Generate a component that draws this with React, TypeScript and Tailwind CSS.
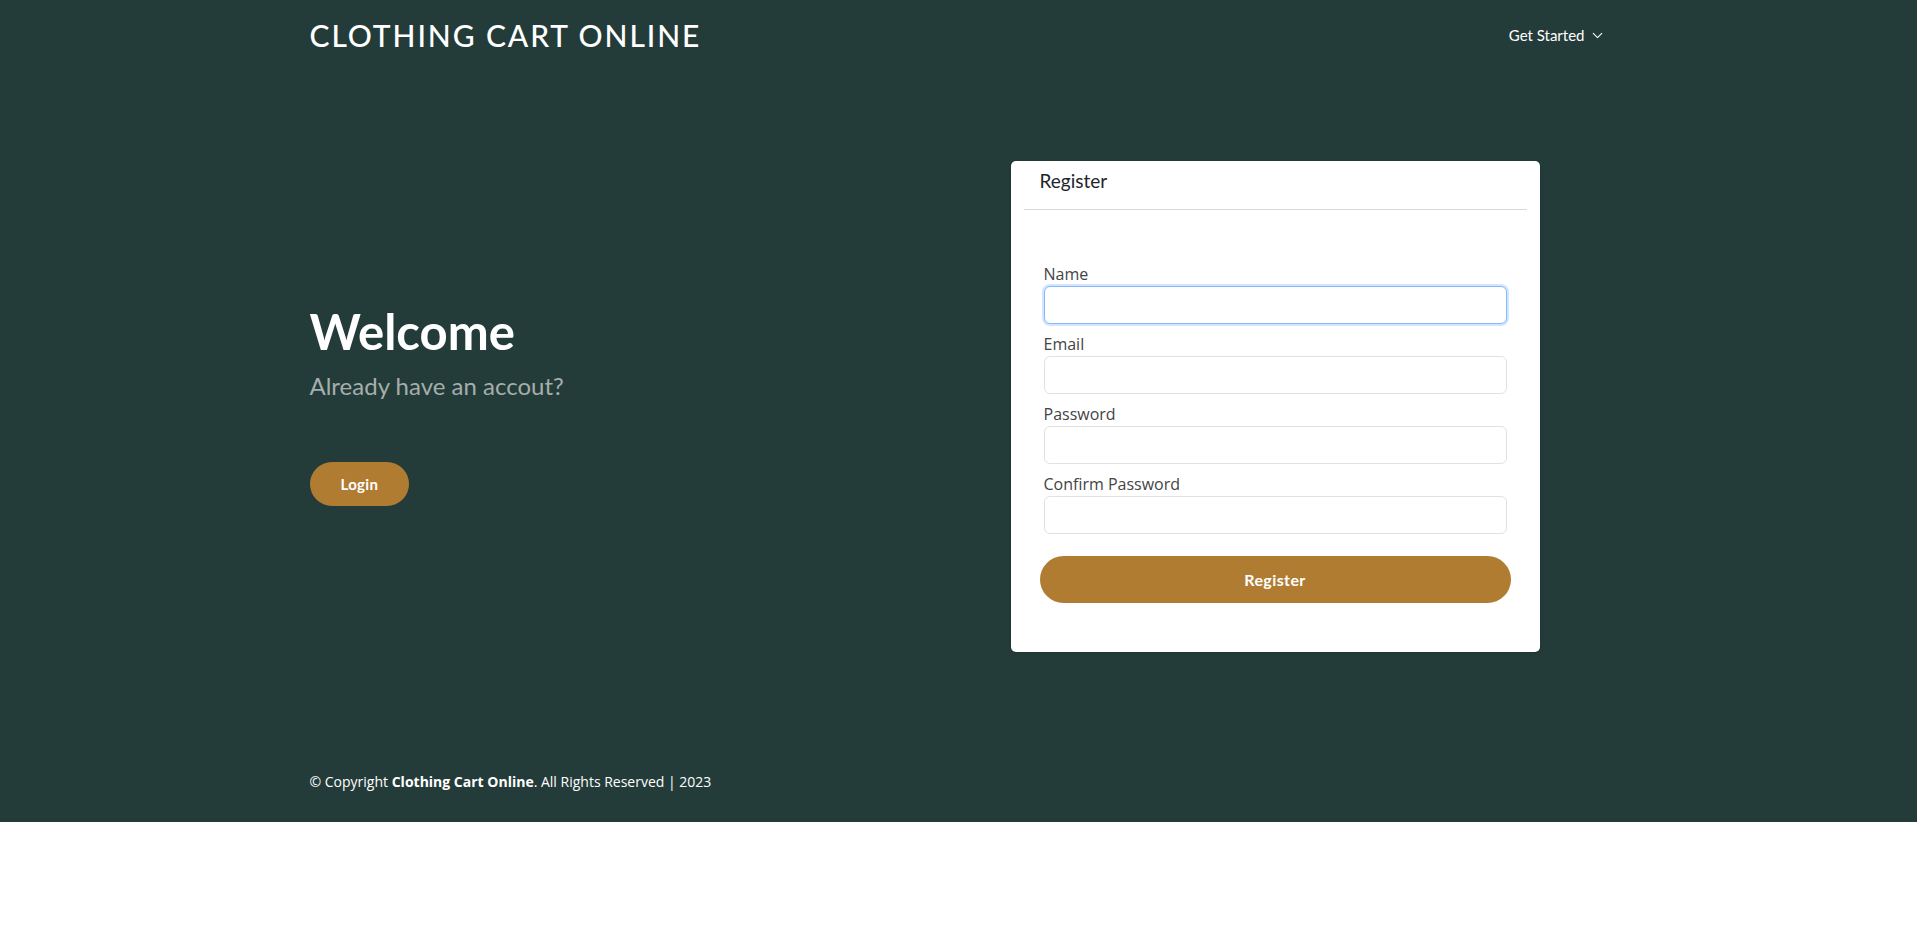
import { ChevronDown } from "lucide-react";

const heading = { fontFamily: "Lato, 'Noto Sans', sans-serif" };
const body = { fontFamily: "'Open Sans', 'Noto Sans', sans-serif" };

const fields = ["Name", "Email", "Password", "Confirm Password"];

export default function App() {
  return (
    <div className="min-h-screen bg-white">
      <div className="h-[822px] bg-[#243c39] flex flex-col">
        {/* HEADER */}
        <header className="h-[70px] flex items-center">
          <div className="w-[1298px] mx-auto flex items-center justify-between" style={heading}>
            <a className="text-[30px] font-medium tracking-[1.9px] text-white uppercase leading-none">
              Clothing Cart Online
            </a>
            <button className="flex items-center gap-[4px] text-[15px] text-white mr-[2px]">
              Get Started
              <ChevronDown size={17} strokeWidth={1.5} />
            </button>
          </div>
        </header>

        {/* HERO */}
        <main className="pt-[91px]">
          <div className="w-[1298px] mx-auto flex items-start">
            <div className="flex-1 pt-[142px]" style={heading}>
              <h1 className="text-[49px] font-bold text-white leading-[56px]">Welcome</h1>
              <p className="text-[24px] text-[#a5aeac] leading-[32px] mt-[11px]">Already have an accout?</p>
              <button className="mt-[60px] h-[44px] px-[31px] rounded-full bg-[#b07c32] text-white text-[15px] font-bold tracking-[0.3px]">
                Login
              </button>
            </div>

            {/* CARD */}
            <div className="w-[529px] h-[491px] mr-[68px] bg-white rounded-[5px] px-[13px] pt-[8px] shadow-sm">
              <div className="px-[16px] pb-[16px] border-b border-[#d8d8d8]" style={heading}>
                <h2 className="text-[19px] leading-[24px] text-[#212529]">Register</h2>
              </div>

              <form className="px-[20px] pt-[52px]" style={body}>
                {fields.map((f, i) => (
                  <div key={f} className="mb-[8px]">
                    <label className="block text-[16px] leading-[24px] text-[#444]">{f}</label>
                    <input
                      type={f.includes("Password") ? "password" : f === "Email" ? "email" : "text"}
                      className={`block w-full h-[38px] rounded-[6px] border bg-white outline-none ${
                        i === 0
                          ? "border-[#86b7fe] shadow-[0_0_0_2px_rgba(13,110,253,0.18)]"
                          : "border-[#dee2e6]"
                      }`}
                    />
                  </div>
                ))}
                <button
                  type="button"
                  className="mt-[14px] -mx-[4px] w-[calc(100%+8px)] h-[47px] rounded-full bg-[#b07c32] text-white text-[16px] font-bold tracking-[0.4px]"
                  style={heading}
                >
                  Register
                </button>
              </form>
            </div>
          </div>
        </main>

        {/* FOOTER */}
        <footer className="mt-[120px]">
          <div className="w-[1298px] mx-auto text-[14px] leading-[20px] text-white" style={body}>
            © Copyright <strong className="font-bold">Clothing Cart Online</strong>. All Rights Reserved | 2023
          </div>
        </footer>
      </div>
    </div>
  );
}
